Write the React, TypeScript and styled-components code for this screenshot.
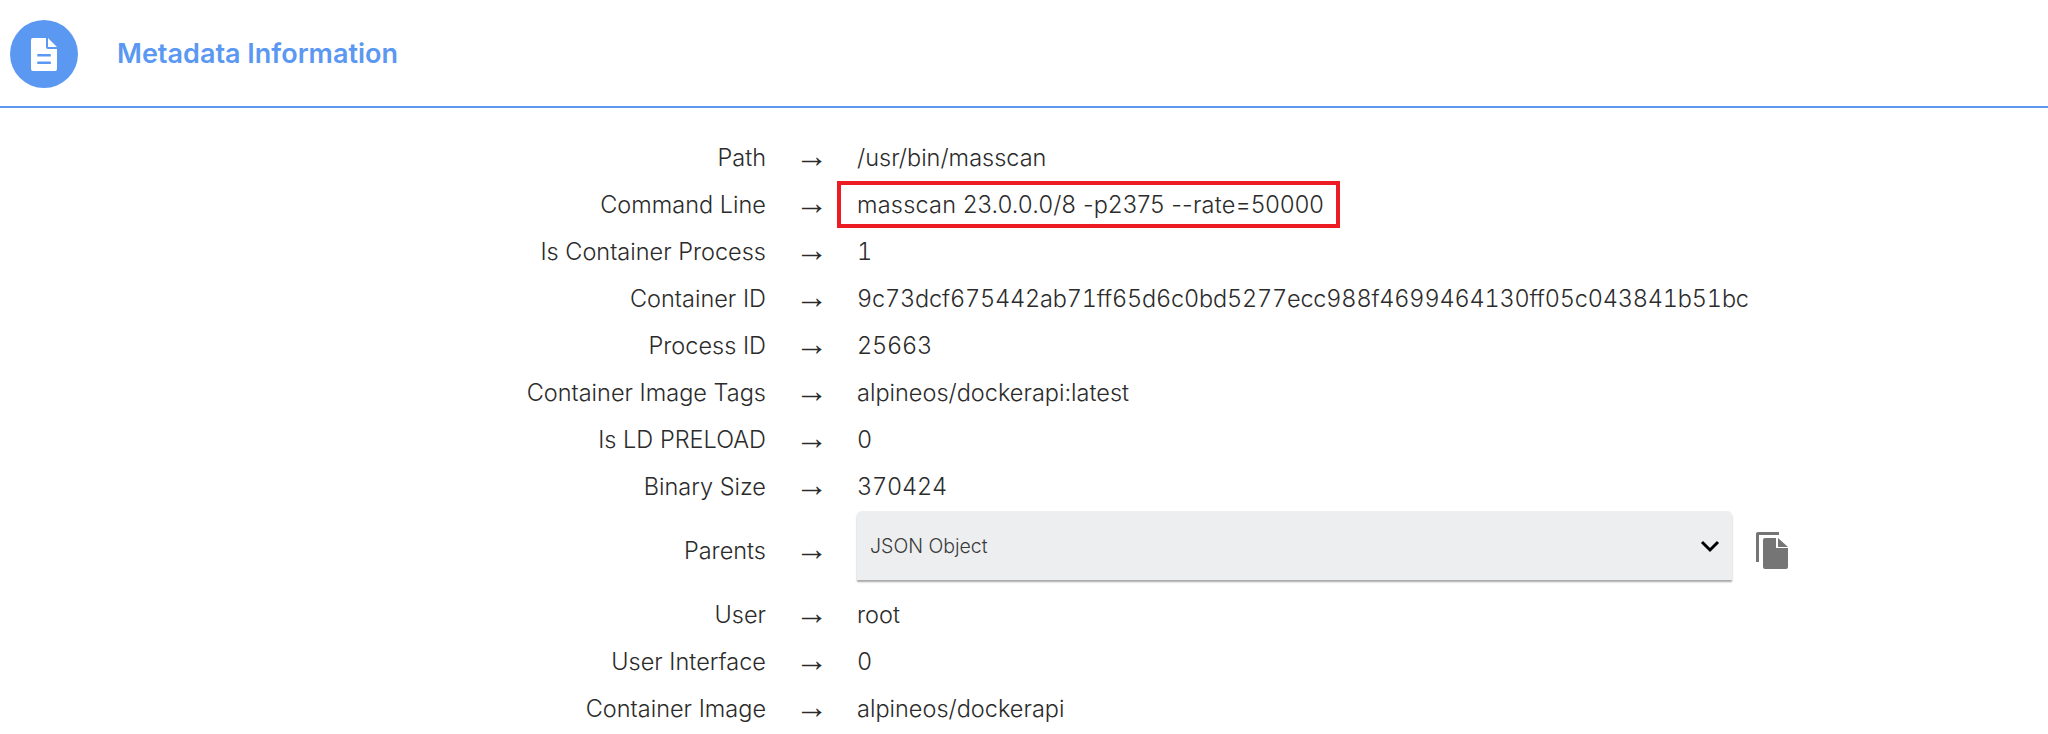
import styled, { createGlobalStyle } from "styled-components";

const GlobalStyle = createGlobalStyle`
  html, body {
    margin: 0;
    padding: 0;
    background: #fff;
    font-family: "Inter", "Liberation Sans", sans-serif;
    color: #2b2b2b;
  }
`;

const Header = styled.header`
  display: flex;
  align-items: center;
  height: 108px;
  padding: 2px 0 0 10px;
  box-sizing: border-box;
  border-bottom: 2px solid #5e97f2;
`;

const Badge = styled.div`
  width: 68px;
  height: 68px;
  border-radius: 50%;
  background: #5b98f2;
  display: flex;
  align-items: center;
  justify-content: center;
`;

const Title = styled.h2`
  margin: 0 0 2px 39px;
  font-size: 27px;
  font-weight: 600;
  color: #5b98f2;
`;

const Table = styled.div`
  display: grid;
  grid-template-columns: 766px 91px 1fr;
  padding-top: 26px;
`;

const Row = styled.div`
  display: contents;
`;

const Label = styled.div<{ $tall?: boolean }>`
  height: ${(p) => (p.$tall ? "81px" : "47px")};
  display: flex;
  align-items: center;
  justify-content: flex-end;
  font-size: 23.5px;
  font-weight: 350;
`;

const Arrow = styled.div<{ $tall?: boolean }>`
  height: ${(p) => (p.$tall ? "81px" : "47px")};
  box-sizing: border-box;
  display: flex;
  align-items: center;
  padding: 0 0 5px 29px;
  font-size: 33px;
  font-weight: 300;
  font-family: "Liberation Sans", sans-serif;
  line-height: 1;
`;

const Value = styled.div<{ $numeric?: boolean }>`
  height: 47px;
  display: flex;
  align-items: center;
  font-size: 23.5px;
  font-weight: 350;
  font-variant-numeric: ${(p) => (p.$numeric ? "tabular-nums" : "normal")};
  letter-spacing: ${(p) => (p.$numeric ? "-0.18px" : "0")};
`;

const Highlight = styled.span`
  height: 47px;
  box-sizing: border-box;
  display: flex;
  align-items: center;
  margin-left: -20px;
  padding: 0 12px 0 16px;
  border: 4px solid #ed1c24;
  letter-spacing: 0.2px;
`;

const SelectCell = styled.div`
  display: flex;
  align-items: center;
  height: 81px;
`;

const Select = styled.div`
  width: 875px;
  height: 69px;
  margin-top: -10px;
  box-sizing: border-box;
  padding: 0 10px 0 13px;
  display: flex;
  align-items: center;
  justify-content: space-between;
  background: #edeef0;
  border-radius: 5px 5px 0 0;
  box-shadow: 0 2px 2px rgba(0, 0, 0, 0.35);
  font-size: 19.5px;
  font-weight: 350;
  color: #3a3a3a;
`;

const CopyIcon = styled.svg`
  width: 32px;
  height: 37px;
  margin-left: 24px;
`;

type Item = { label: string; value?: string; flagged?: boolean };

const items: Item[] = [
  { label: "Path", value: "/usr/bin/masscan" },
  { label: "Command Line", value: "masscan 23.0.0.0/8 -p2375 --rate=50000", flagged: true },
  { label: "Is Container Process", value: "1" },
  { label: "Container ID", value: "9c73dcf675442ab71ff65d6c0bd5277ecc988f4699464130ff05c043841b51bc" },
  { label: "Process ID", value: "25663" },
  { label: "Container Image Tags", value: "alpineos/dockerapi:latest" },
  { label: "Is LD PRELOAD", value: "0" },
  { label: "Binary Size", value: "370424" },
  { label: "Parents" },
  { label: "User", value: "root" },
  { label: "User Interface", value: "0" },
  { label: "Container Image", value: "alpineos/dockerapi" },
];

export default function App() {
  return (
    <>
      <GlobalStyle />
      <Header>
        <Badge>
          <svg width="26" height="33" viewBox="0 0 26 33">
            <path
              fill="#fff"
              fillRule="evenodd"
              d="M2 0h13v9a2 2 0 0 0 2 2h9v20a2 2 0 0 1-2 2H2a2 2 0 0 1-2-2V2a2 2 0 0 1 2-2zM6.300 16v2.500h13.500v-2.500zM6.300 23.500v2.500h13.500v-2.500zM17 0l9 9h-9z"
            />
          </svg>
        </Badge>
        <Title>Metadata Information</Title>
      </Header>
      <Table>
        {items.map((item) => {
          const tall = item.value === undefined;
          return (
            <Row key={item.label}>
              <Label $tall={tall}>{item.label}</Label>
              <Arrow $tall={tall}>→</Arrow>
              {tall ? (
                <SelectCell>
                  <Select>
                    JSON Object
                    <svg width="24" height="24" viewBox="0 0 24 24">
                      <path d="M4 8l8 8 8-8" fill="none" stroke="#000" strokeWidth="3" />
                    </svg>
                  </Select>
                  <CopyIcon viewBox="0 0 32 37">
                    <path
                      fill="#757575"
                      d="M2 0h21v3H3v27H0V2a2 2 0 0 1 2-2zM9 6h11v10h12v19a2 2 0 0 1-2 2H9a2 2 0 0 1-2-2V8a2 2 0 0 1 2-2zM22 6l10 9H22z"
                    />
                  </CopyIcon>
                </SelectCell>
              ) : (
                <Value $numeric={!item.flagged && /\d/.test(item.value as string)}>
                  {item.flagged ? <Highlight>{item.value}</Highlight> : item.value}
                </Value>
              )}
            </Row>
          );
        })}
      </Table>
    </>
  );
}
